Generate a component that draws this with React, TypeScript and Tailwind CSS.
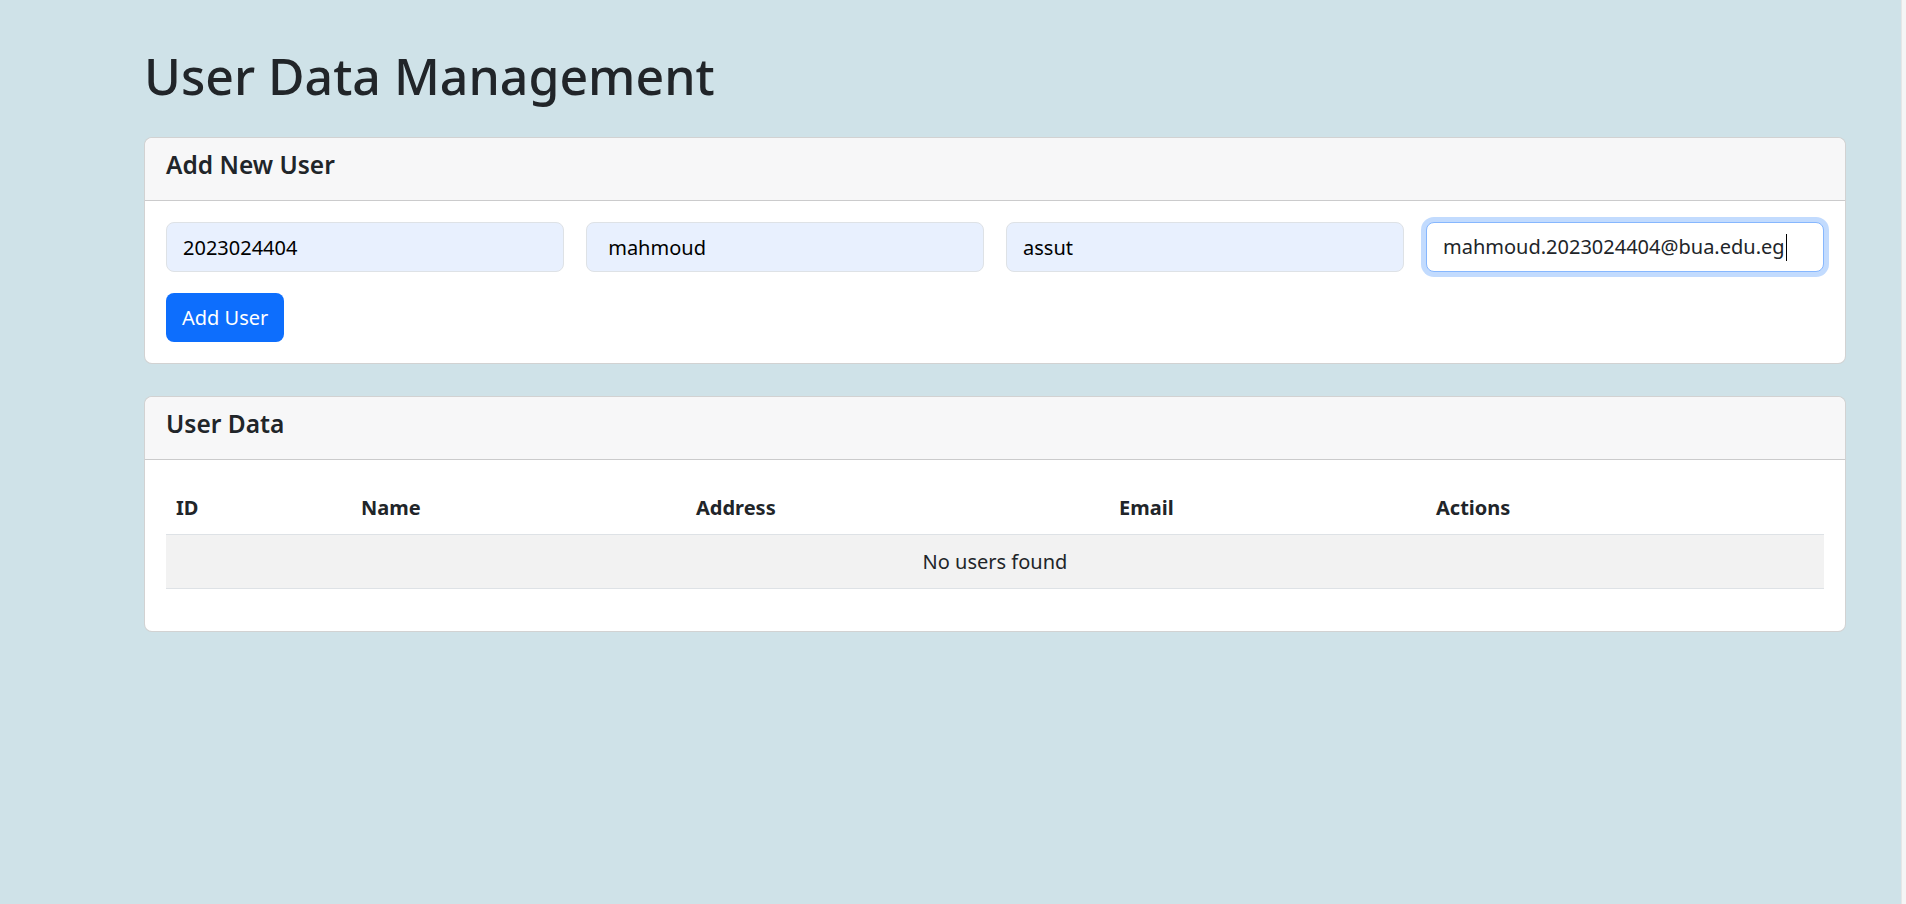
import React from "react";

const columns = [
  { label: "ID", width: "w-[185px]" },
  { label: "Name", width: "w-[335px]" },
  { label: "Address", width: "w-[423px]" },
  { label: "Email", width: "w-[317px]" },
  { label: "Actions", width: "" },
];

function Card({ title, children }: { title: string; children: React.ReactNode }) {
  return (
    <div className="rounded-[8px] border border-[rgba(0,0,0,0.175)] bg-white">
      <div className="rounded-t-[8px] border-b border-[rgba(0,0,0,0.175)] bg-[#f7f7f8] px-[21px] pt-[12px] pb-[21px]">
        <h5 className="text-[24.5px] leading-[29px] font-semibold text-[#212529]">{title}</h5>
      </div>
      <div className="p-[21px]">{children}</div>
    </div>
  );
}

export default function App() {
  return (
    <div className="flex min-h-screen bg-[#cfe2e8] font-['Noto_Sans','Open_Sans',sans-serif] text-[#212529]">
      <main className="flex-1 pl-[144px] pr-[55px] pt-[44px]">
        <h1 className="mb-[29px] text-[50px] leading-[64px] font-medium text-[#212529]">
          User Data Management
        </h1>

        {/* Add user form */}
        <Card title="Add New User">
          <div className="grid grid-cols-4 gap-[22px]">
            <input
              readOnly
              value="2023024404"
              className="h-[50px] rounded-[8px] border border-[#dee2e6] bg-[#e8f0fe] px-[16px] text-[20px] text-black outline-none"
            />
            <input
              readOnly
              value=" mahmoud"
              className="h-[50px] rounded-[8px] border border-[#dee2e6] bg-[#e8f0fe] px-[16px] text-[20px] text-black outline-none"
            />
            <input
              readOnly
              value="assut"
              className="h-[50px] rounded-[8px] border border-[#dee2e6] bg-[#e8f0fe] px-[16px] text-[20px] text-black outline-none"
            />
            <div className="flex h-[50px] items-center rounded-[8px] border border-[#86b7fe] bg-white px-[16px] text-[20px] text-[#212529] shadow-[0_0_0_5px_rgba(13,110,253,0.25)]">
              <span>mahmoud.2023024404@bua.edu.eg</span>
              <span className="ml-px h-[27px] w-px bg-black" />
            </div>
          </div>
          <button className="mt-[21px] h-[49px] rounded-[8px] bg-[#0d6efd] px-[16px] text-[20px] text-white">
            Add User
          </button>
        </Card>

        <div className="h-[32px]" />

        {/* Users table */}
        <Card title="User Data">
          <table className="mb-[21px] w-full border-collapse text-[20px]">
            <thead>
              <tr className="border-b border-[#dee2e6]">
                {columns.map((c) => (
                  <th
                    key={c.label}
                    className={`${c.width} px-[10px] pt-[11px] pb-[10px] text-left leading-[32px] font-bold text-[#212529]`}
                  >
                    {c.label}
                  </th>
                ))}
              </tr>
            </thead>
            <tbody>
              <tr className="border-b border-[#dee2e6] bg-[#f2f2f2]">
                <td colSpan={5} className="px-[10px] pt-[11px] pb-[10px] text-center leading-[32px]">
                  No users found
                </td>
              </tr>
            </tbody>
          </table>
        </Card>
      </main>
      <div className="w-[5px] border-l border-[#e6e6e6] bg-[#f5f5f5]" />
    </div>
  );
}
